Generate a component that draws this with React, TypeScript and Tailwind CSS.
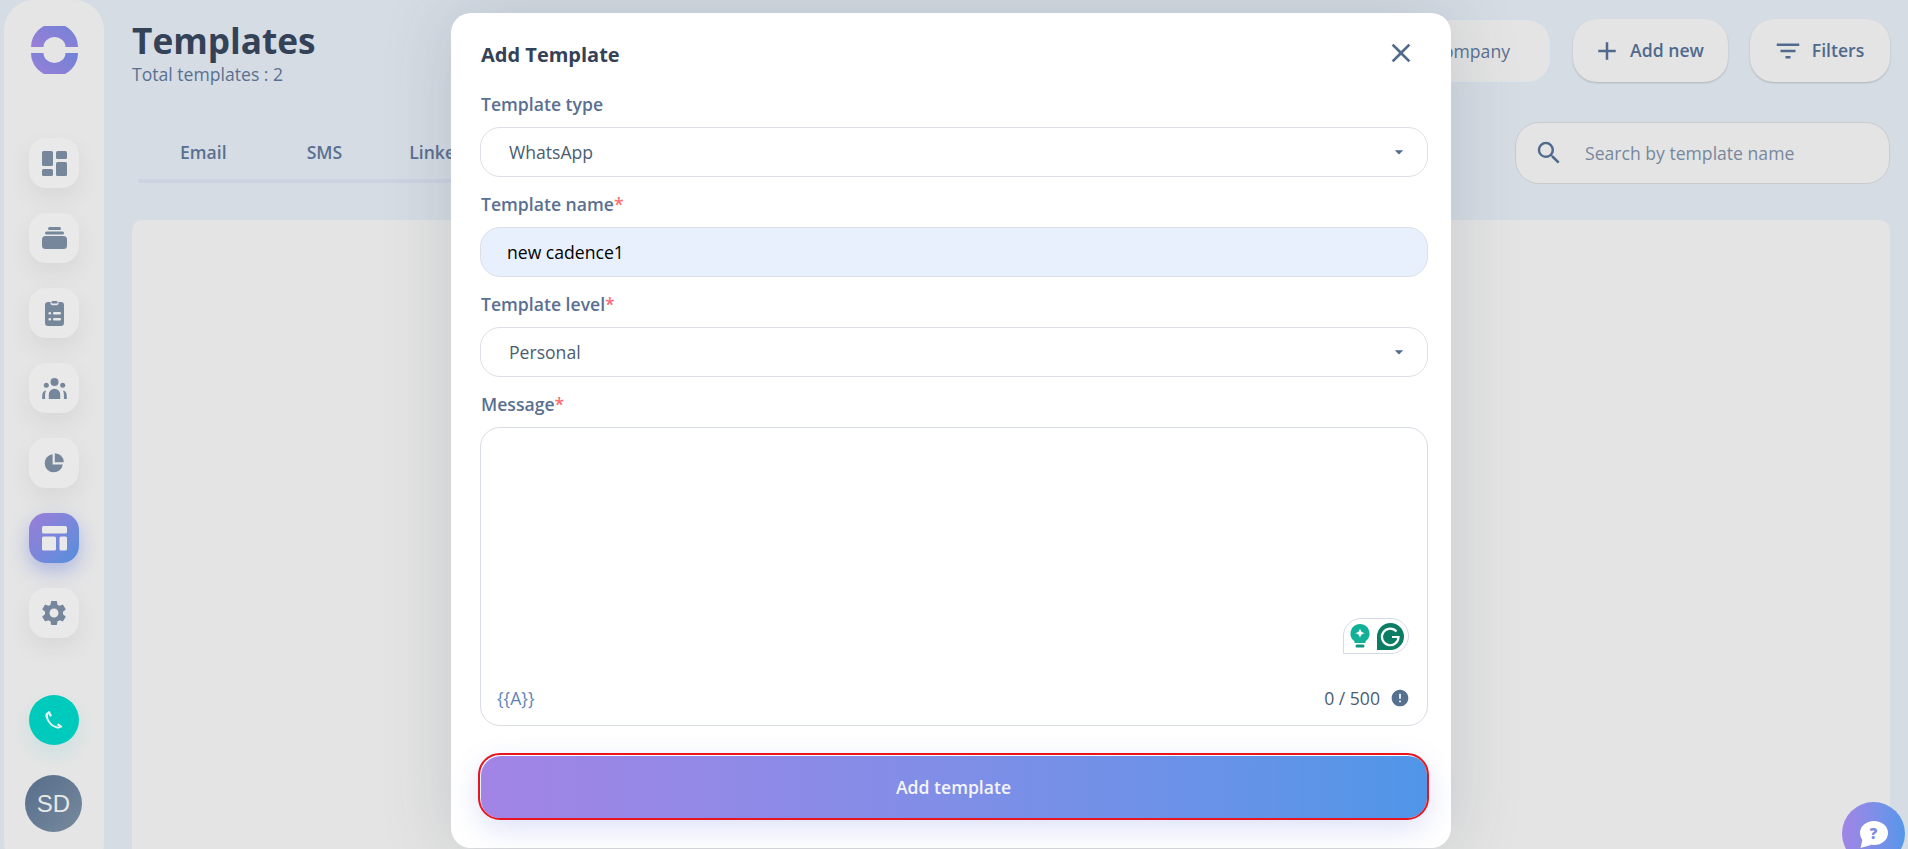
import React from "react";
import { MdAdd, MdArrowDropDown, MdClose, MdFilterList, MdSearch, MdSettings, MdError } from "react-icons/md";

const navBtn = "flex h-[50px] w-[50px] items-center justify-center rounded-[17px] bg-[#e9e9e9] shadow-[0_10px_20px_rgba(120,120,120,0.12)]";
const ic = "#76879b";

function Dash() {
  return (
    <svg width="25" height="25" viewBox="0 0 25 25" fill={ic}>
      <rect x="0" y="0" width="11" height="15" rx="1.5" />
      <rect x="14" y="0" width="11" height="8" rx="1.5" />
      <rect x="0" y="18" width="11" height="7" rx="1.5" />
      <rect x="14" y="11" width="11" height="14" rx="1.5" />
    </svg>
  );
}
function Stack() {
  return (
    <svg width="25" height="22" viewBox="0 0 25 22" fill={ic}>
      <rect x="6" y="0" width="13" height="3" rx="1.5" />
      <rect x="3" y="4.5" width="19" height="3" rx="1.5" />
      <rect x="0" y="9" width="25" height="13" rx="3.5" />
    </svg>
  );
}
function Clip() {
  return (
    <svg width="19" height="25" viewBox="0 0 19 25">
      <path fill={ic} d="M3 1h2.500v1.200a2 2 0 0 0 2 2h4a2 2 0 0 0 2-2V1H16a3 3 0 0 1 3 3v18a3 3 0 0 1-3 3H3a3 3 0 0 1-3-3V4a3 3 0 0 1 3-3z" />
      <rect x="6.500" y="0" width="6" height="2.400" rx="1.200" fill={ic} />
      <rect x="3.500" y="11" width="2.600" height="2.400" rx="1.200" fill="#e9e9e9" />
      <rect x="8" y="11" width="8" height="2.400" rx="1.200" fill="#e9e9e9" />
      <rect x="3.500" y="17" width="2.600" height="2.400" rx="1.200" fill="#e9e9e9" />
      <rect x="8" y="17" width="8" height="2.400" rx="1.200" fill="#e9e9e9" />
    </svg>
  );
}
function People() {
  return (
    <svg width="25" height="21" viewBox="0 0 25 21" fill={ic}>
      <circle cx="12.500" cy="4" r="4" />
      <circle cx="4.300" cy="7.200" r="2.500" />
      <circle cx="20.700" cy="7.200" r="2.500" />
      <path d="M6.800 21v-4.500a5.700 5.700 0 0 1 11.400 0V21z" />
      <path d="M0.200 21v-3.200c0-3 1.400-5 3.900-5.200-.7 1.200-1 2.600-1 4.200V21z" />
      <path d="M24.800 21v-3.200c0-3-1.400-5-3.900-5.200.7 1.200 1 2.600 1 4.200V21z" />
    </svg>
  );
}
function Pie() {
  return (
    <svg width="20" height="20" viewBox="0 0 20 20" fill={ic}>
      <path d="M8.600 1.200A9.100 9.100 0 1 0 18.800 11.400H8.600z" />
      <path d="M10.800 0.200A9 9 0 0 1 19.800 9.200h-9z" />
    </svg>
  );
}
function Layout() {
  return (
    <svg width="25" height="25" viewBox="0 0 25 25" fill="#e9e9e9">
      <rect x="0" y="0" width="25" height="7.500" rx="1.500" />
      <rect x="0" y="10.500" width="14" height="14" rx="1.500" />
      <rect x="17.500" y="10.500" width="7.500" height="14" rx="1.500" />
    </svg>
  );
}
function Phone() {
  return (
    <svg width="18" height="18" viewBox="0 0 18 18" fill="#e9f4f2">
      <path d="M3.600 0.600 1.700 1.800C.6 2.600.2 3.800.5 5.200c.7 3 2.200 5.800 4.400 8 2 2 4.400 3.500 7.300 4.200 1.400.3 2.800-.1 3.600-1.200l-1.200-1.100c-.5.5-1.300.7-2.200.5-2.500-.7-4.600-1.900-6.300-3.700C4.300 10 3 7.700 2.900 5.300c-.2-.9 0-1.700.7-2.300l1.500-.9z" />
      <path d="M2.500 1.100 4.500.1 7 4.400 5 5.900z" />
      <path d="M12 14.300 13.400 12.300 17.400 15.500 16 17.100z" />
    </svg>
  );
}
function Help() {
  return (
    <div className="absolute left-[1842px] top-[802px] flex h-[63px] w-[63px] items-start justify-center rounded-full bg-gradient-to-r from-[#a084e6] to-[#5297ea]">
      <div className="relative mt-[19px] flex h-[24px] w-[28px] items-center justify-center rounded-[50%] bg-white text-[15px] leading-none font-extrabold text-[#7f8ae6]">
        ?
        <svg className="absolute left-0 top-[16px]" width="12" height="12" viewBox="0 0 12 12" fill="#fff">
          <path d="M3 0 L0.500 11 L11 8z" />
        </svg>
      </div>
    </div>
  );
}
function Grammarly() {
  return (
    <div className="absolute bottom-[71px] right-[18px] flex h-[36px] w-[66px] items-center justify-end gap-[7px] rounded-tl-[18px] rounded-r-[18px] border border-[#d6dae6] bg-white pr-[4px]">
      <svg width="20" height="24" viewBox="0 0 20 24">
        <path fill="#12b096" d="M10 0a9.500 9.500 0 0 1 5.500 17.200V19H4.500v-1.800A9.500 9.500 0 0 1 10 0z" />
        <path fill="#fff" d="M10 4.500c.6 2.900 1.800 4.100 4.700 4.700-2.900.6-4.100 1.800-4.700 4.700-.6-2.900-1.800-4.100-4.700-4.700C8.200 8.600 9.400 7.400 10 4.500z" />
        <rect x="5.500" y="20.500" width="9" height="3" rx="1.500" fill="#0d9680" />
      </svg>
      <svg width="27" height="27" viewBox="0 0 27 27">
        <path fill="#0a7d64" d="M13.500 0A13.500 13.500 0 0 1 13.500 27H0V13.500A13.500 13.500 0 0 1 13.500 0z" />
        <path fill="none" stroke="#fff" strokeWidth="2.200" d="M19.500 8.500A8.300 8.300 0 1 0 21.500 14h-6.500" />
      </svg>
    </div>
  );
}
function Label({ text, req }: { text: string; req?: boolean }) {
  return (
    <div className="ml-[1px] h-[22px] text-[17.6px] leading-[22px] font-semibold text-[#5a7090]">
      {text}
      {req && <span className="text-[#ff6b73]">*</span>}
    </div>
  );
}
function Select({ value }: { value: string }) {
  return (
    <div className="flex h-[50px] items-center justify-between rounded-[20px] border border-[#dcdfe5] bg-white pl-[28px] pr-[18px] text-[17.6px] text-[#4b5c72]">
      <span>{value}</span>
      <MdArrowDropDown size={20} color="#4f6a8c" />
    </div>
  );
}

export default function App() {
  return (
    <div className="relative flex h-[849px] w-full overflow-hidden bg-[#d5dce4] font-['Open_Sans',sans-serif]">
      <aside className="ml-[4px] flex h-[872px] w-[100px] shrink-0 flex-col items-center rounded-[30px] bg-[#e5e5e5] pt-[26px]">
        <svg width="47" height="48" viewBox="0 0 47 48">
          <defs>
            <linearGradient id="lg" x1="0" y1="1" x2="1" y2="0">
              <stop offset="0" stopColor="#9b7ed8" />
              <stop offset="1" stopColor="#6f83d6" />
            </linearGradient>
          </defs>
          <path fill="url(#lg)" d="M0 21A23.500 23.500 0 0 1 47 21H34.500A11 10 0 0 0 12.500 21z" />
          <path fill="url(#lg)" d="M0 27A23.500 23.500 0 0 0 47 27H34.500A11 10 0 0 1 12.500 27z" />
        </svg>
        <nav className="mt-[64px] flex flex-col gap-[25px]">
          <div className={navBtn}><Dash /></div>
          <div className={navBtn}><Stack /></div>
          <div className={navBtn}><Clip /></div>
          <div className={navBtn}><People /></div>
          <div className={navBtn}><Pie /></div>
          <div className="flex h-[50px] w-[50px] items-center justify-center rounded-[17px] bg-gradient-to-br from-[#9a7cd8] to-[#4f8fdc] shadow-[0_8px_20px_rgba(90,110,220,0.4)]"><Layout /></div>
          <div className={navBtn}><MdSettings size={30} color={ic} /></div>
        </nav>
        <div className="mt-[57px] flex h-[50px] w-[50px] items-center justify-center rounded-full bg-[#00cabb] shadow-[0_10px_20px_rgba(0,202,187,0.12)]"><Phone /></div>
        <div className="mt-[30px] -ml-[1px] flex h-[57px] w-[57px] items-center justify-center rounded-full bg-gradient-to-br from-[#566d8a] to-[#778a9e] font-['Liberation_Sans',sans-serif] text-[24px] text-[#e8e8e8]">SD</div>
      </aside>

      <main className="ml-[28px] flex min-w-0 flex-1 flex-col pr-[18px]">
        <div className="flex h-[122px] items-start justify-between pt-[19px]">
          <div>
            <h1 className="text-[35.2px] leading-[42px] font-bold text-[#344258]">Templates</h1>
            <p className="mt-[1px] text-[17.6px] leading-[24px] text-[#5a7090]">Total templates : 2</p>
          </div>
          <div className="flex items-start gap-[22px]">
            <div className="flex h-[64px] w-[150px] items-center justify-end rounded-[24px] border border-[#cfdcea] bg-[#e4e4e4] pr-[40px] text-[17.6px] text-[#5a7090]">Company</div>
            <div className="flex h-[63px] w-[155px] items-center justify-center gap-[8px] rounded-[24px] bg-[#e4e4e4] pr-[5px] text-[17.6px] font-semibold text-[#4f6a8c] shadow-[0_1px_2px_rgba(0,0,0,0.18)]">
              <MdAdd size={30} />Add new
            </div>
            <div className="flex h-[63px] w-[140px] items-center justify-center gap-[9px] rounded-[24px] bg-[#e4e4e4] pr-[3px] text-[17.6px] font-semibold text-[#4f6a8c] shadow-[0_1px_2px_rgba(0,0,0,0.18)]">
              <MdFilterList size={30} />Filters
            </div>
          </div>
        </div>
        <div className="flex h-[98px] items-start justify-between">
          <div className="ml-[6px] w-[900px]">
            <div className="flex h-[57px] items-center pt-[4px] text-[17.6px] font-semibold text-[#5a7090]">
              <span className="ml-[42px]">Email</span>
              <span className="ml-[80px]">SMS</span>
              <span className="ml-[67px]">LinkedIn</span>
              <span className="ml-[67px]">WhatsApp</span>
            </div>
            <div className="h-[4px] rounded-full bg-[#cdd3e2]"></div>
          </div>
          <div className="flex h-[62px] w-[375px] items-center rounded-[24px] border border-[#c9cbcf] bg-[#e4e4e4] pl-[18px]">
            <MdSearch size={30} color="#4f6a8c" />
            <span className="ml-[21px] text-[17.6px] text-[#77889c]">Search by template name</span>
          </div>
        </div>
        <div className="flex-1 rounded-t-[10px] bg-[#e4e4e4]"></div>
      </main>

      <Help />

      <div className="absolute left-[451px] top-[13px] flex h-[835px] w-[1000px] flex-col rounded-[20px] bg-white pl-[29px] pr-[23px] pt-[25px] shadow-[0_0_70px_rgba(60,70,90,0.18)]">
        <div className="flex h-[34px] items-center justify-between">
          <h2 className="ml-[1px] text-[20px] font-bold text-[#344258]">Add Template</h2>
          <MdClose size={32} color="#4f6a8c" className="-mt-[4px] mr-[11px]" />
        </div>
        <div className="mt-[21px] flex flex-col">
          <div className="flex flex-col gap-[12px]">
            <Label text="Template type" />
            <Select value="WhatsApp" />
          </div>
          <div className="mt-[16px] flex flex-col gap-[12px]">
            <Label text="Template name" req />
            <div className="flex h-[50px] items-center rounded-[20px] border border-[#dcdfe5] bg-[#e8f0fe] pl-[26px] text-[17.6px] text-black">new cadence1</div>
          </div>
          <div className="mt-[16px] flex flex-col gap-[12px]">
            <Label text="Template level" req />
            <Select value="Personal" />
          </div>
          <div className="mt-[16px] flex flex-col gap-[12px]">
            <Label text="Message" req />
            <div className="relative flex h-[299px] items-end justify-between rounded-[20px] border border-[#d8dce4] bg-white pb-[14px] pl-[16px] pr-[17px] text-[17.6px]">
              <span className="text-[#5f86b8]">{"{{A}}"}</span>
              <span className="flex items-center gap-[10px] text-[#4b5c72]">
                0 / 500
                <MdError size={20} color="#56708f" />
              </span>
              <Grammarly />
            </div>
          </div>
        </div>
        <div className="mt-[29px] mr-[1px] flex h-[63px] items-center justify-center rounded-[20px] bg-gradient-to-r from-[#a284e6] to-[#4f96e8] pt-[1px] text-[17.6px] font-semibold text-[#f4f4fb] shadow-[inset_1px_1px_0_#fff,0_10px_30px_rgba(90,110,220,0.22)] outline-2 outline-[#e8141f]">
          Add template
        </div>
      </div>
    </div>
  );
}
